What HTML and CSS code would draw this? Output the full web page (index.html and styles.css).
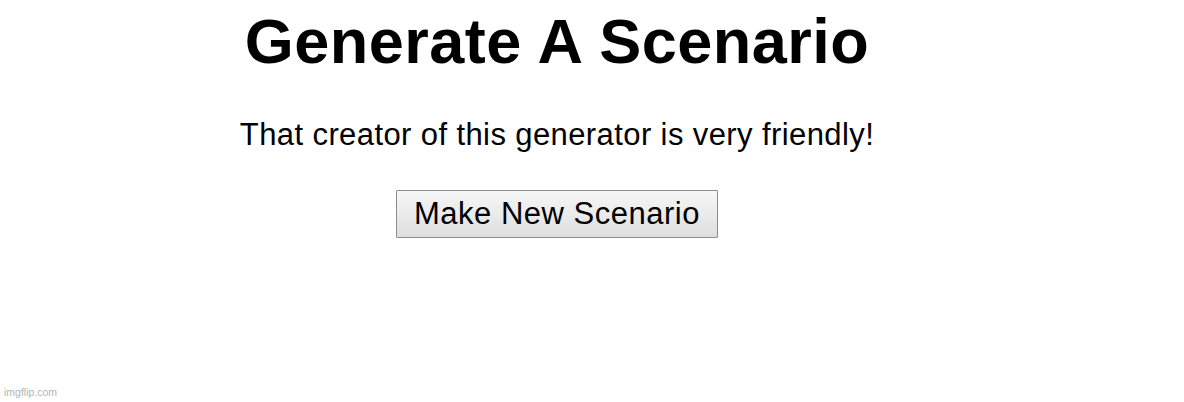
FILE: index.html
```html
<!DOCTYPE html>
<html lang="en">
<head>
  <meta charset="UTF-8">
  <title>Generate A Scenario</title>
  <link rel="stylesheet" href="styles.css">
</head>
<body>

  <div class="page">
    <h1 class="title">Generate A Scenario</h1>
    <p class="scenario" id="scenario">That creator of this generator is very friendly!</p>
    <button class="make-btn" id="makeButton">Make New Scenario</button>
  </div>

  <!-- watermark -->
  <div class="watermark">imgflip.com</div>

</body>
</html>
```

FILE: styles.css
```css
/* basic page */
body {
  margin: 0;
  padding: 5px 0 0 0;
  background: #fff;
  color: #000;
  font-family: "Liberation Sans", Arial, sans-serif;
  height: 402px;
  box-sizing: border-box;
  overflow: hidden;
}

/* centered column */
.page {
  width: 1114px;
  display: flex;
  flex-direction: column;
  align-items: center;
}

/* heading */
.title {
  margin: 0;
  font-size: 63px;
  line-height: 72px;
  font-weight: bold;
  letter-spacing: 0.5px;
}

/* scenario text */
.scenario {
  margin: 40px 0 0 0;
  font-size: 31px;
  line-height: 36px;
  letter-spacing: 0.4px;
}

/* button */
.make-btn {
  margin-top: 37px;
  height: 48px;
  padding: 0 17px;
  font-family: "Liberation Sans", Arial, sans-serif;
  font-size: 31px;
  letter-spacing: 0.5px;
  color: #000;
  border: 1px solid #8c8c8c;
  border-radius: 1px;
  background: linear-gradient(#f7f7f7, #dedede);
  cursor: pointer;
}

/* imgflip mark */
.watermark {
  position: absolute;
  left: 4px;
  bottom: 4px;
  font-size: 10.5px;
  color: #b4b4b4;
}
```
